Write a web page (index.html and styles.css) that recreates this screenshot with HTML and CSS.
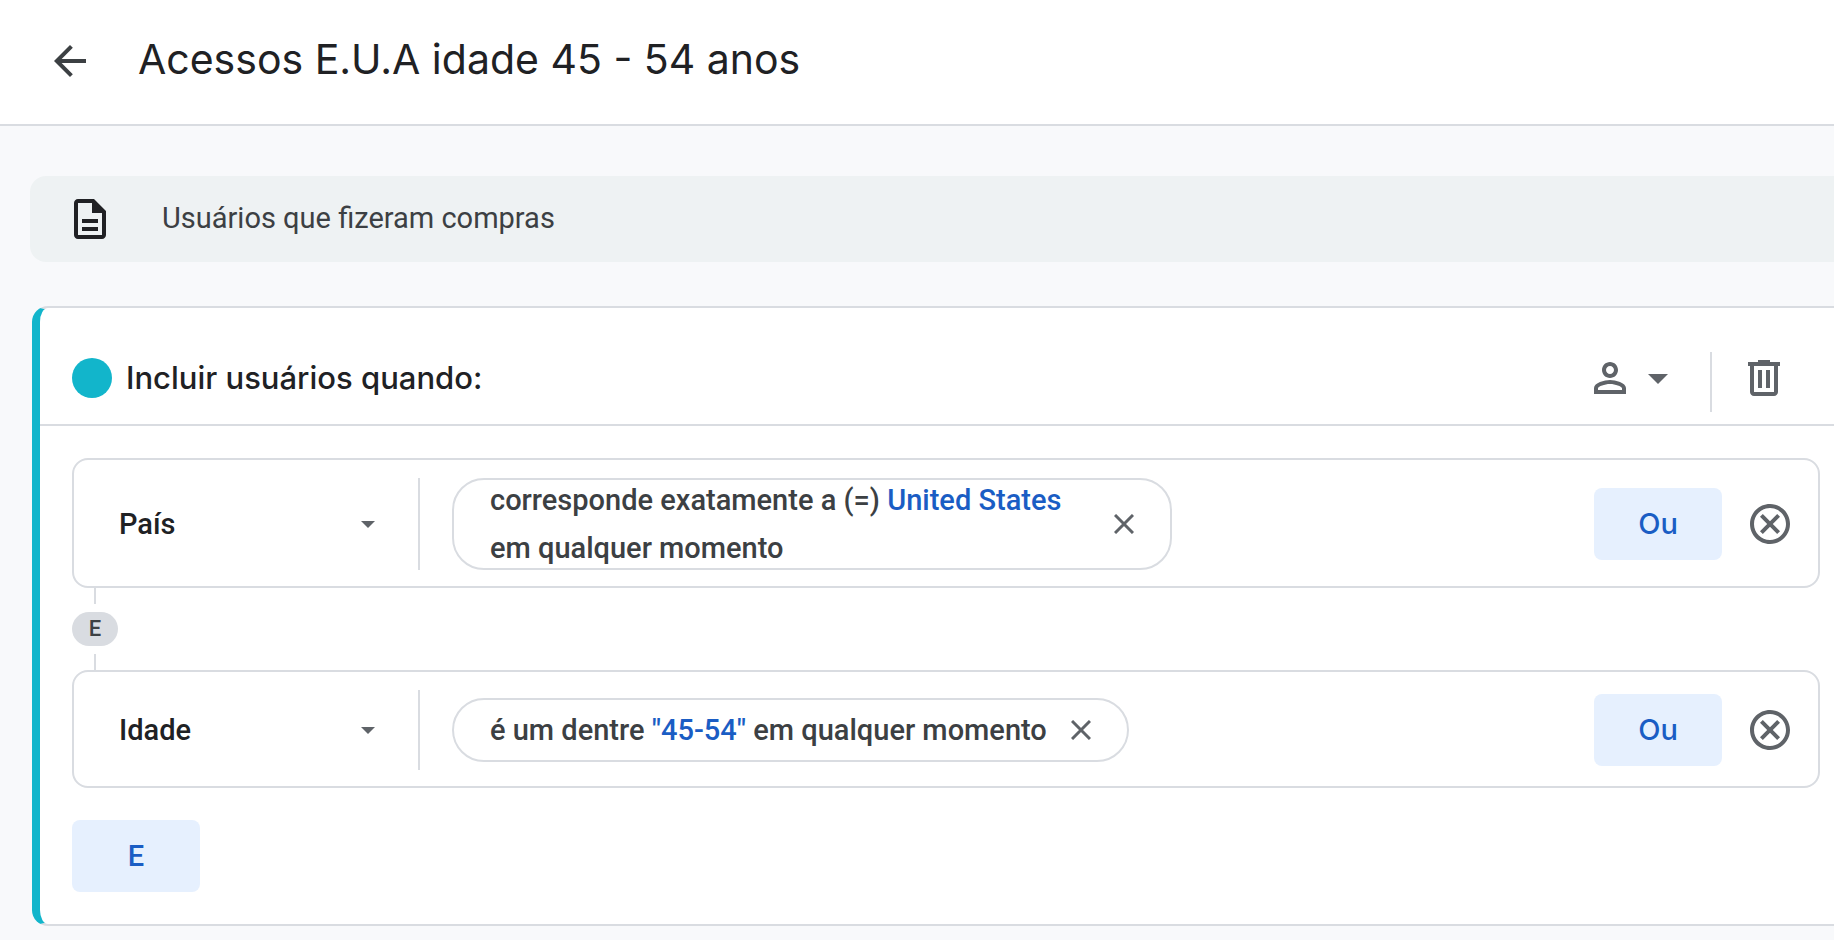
FILE: index.html
```html
<!DOCTYPE html>
<html lang="pt-BR">
<head>
    <meta charset="UTF-8">
    <meta name="viewport" content="width=device-width, initial-scale=1.0">
    <title>Acessos E.U.A idade 45 - 54 anos</title>
    <link rel="stylesheet" href="styles.css">
</head>
<body>
    <header class="page-header">
        <button type="button" class="icon-button" aria-label="Voltar">
            <svg viewBox="0 0 24 24"><path d="M20 11H7.83l5.59-5.59L12 4l-8 8 8 8 1.41-1.41L7.83 13H20v-2z"/></svg>
        </button>
        <h1 class="page-title">Acessos E.U.A idade 45 - 54 anos</h1>
    </header>

    <main>
        <div class="description">
            <svg class="icon" viewBox="0 0 24 24"><path d="M8 16h8v2H8zm0-4h8v2H8zm6-10H6c-1.1 0-2 .9-2 2v16c0 1.1.89 2 1.99 2H18c1.1 0 2-.9 2-2V8l-6-6zm4 18H6V4h7v5h5v11z"/></svg>
            <p>Usuários que fizeram compras</p>
        </div>

        <section class="card">
            <div class="card-header">
                <span class="dot"></span>
                <h2 class="card-title">Incluir usuários quando:</h2>
                <button type="button" class="scope-button" aria-label="Escopo">
                    <svg class="icon" viewBox="0 0 24 24"><path d="M12 12c2.21 0 4-1.79 4-4s-1.79-4-4-4-4 1.79-4 4 1.79 4 4 4zm0-6c1.1 0 2 .9 2 2s-.9 2-2 2-2-.9-2-2 .9-2 2-2zm0 7c-2.67 0-8 1.34-8 4v3h16v-3c0-2.66-5.33-4-8-4zm6 5H6v-.99c.2-.72 3.3-2.01 6-2.01s5.8 1.29 6 2v1z"/></svg>
                    <svg class="icon" viewBox="0 0 24 24"><path d="M7 10l5 5 5-5z"/></svg>
                </button>
                <span class="header-divider"></span>
                <button type="button" class="icon-button" aria-label="Excluir">
                    <svg viewBox="0 0 24 24"><path d="M15 4V3H9v1H4v2h1v13c0 1.1.9 2 2 2h10c1.1 0 2-.9 2-2V6h1V4h-5zm2 15H7V6h10v13zM9 8h2v9H9zm4 0h2v9h-2z"/></svg>
                </button>
            </div>

            <div class="card-body">
                <div class="condition">
                    <div class="field">
                        <select aria-label="Dimensão 1">
                            <option>País</option>
                        </select>
                    </div>
                    <div class="chip chip-wrap">
                        <p>corresponde exatamente a (=) <span class="value">United States</span><br>em qualquer momento</p>
                        <button type="button" class="chip-close" aria-label="Remover filtro">
                            <svg viewBox="0 0 20 20"><path d="M1 1l18 18M19 1L1 19"/></svg>
                        </button>
                    </div>
                    <button type="button" class="button button-or">Ou</button>
                    <button type="button" class="icon-button" aria-label="Remover condição">
                        <svg viewBox="0 0 24 24"><path d="M12 2C6.47 2 2 6.47 2 12s4.47 10 10 10 10-4.47 10-10S17.53 2 12 2zm0 18c-4.41 0-8-3.59-8-8s3.59-8 8-8 8 3.59 8 8-3.59 8-8 8zm3.59-13L12 10.59 8.41 7 7 8.41 10.59 12 7 15.59 8.41 17 12 13.41 15.59 17 17 15.59 13.41 12 17 8.41z"/></svg>
                    </button>
                </div>

                <div class="connector"><span>E</span></div>

                <div class="condition">
                    <div class="field">
                        <select aria-label="Dimensão 2">
                            <option>Idade</option>
                        </select>
                    </div>
                    <div class="chip">
                        <p>é um dentre <span class="value">"45-54"</span> em qualquer momento</p>
                        <button type="button" class="chip-close" aria-label="Remover filtro">
                            <svg viewBox="0 0 20 20"><path d="M1 1l18 18M19 1L1 19"/></svg>
                        </button>
                    </div>
                    <button type="button" class="button button-or">Ou</button>
                    <button type="button" class="icon-button" aria-label="Remover condição">
                        <svg viewBox="0 0 24 24"><path d="M12 2C6.47 2 2 6.47 2 12s4.47 10 10 10 10-4.47 10-10S17.53 2 12 2zm0 18c-4.41 0-8-3.59-8-8s3.59-8 8-8 8 3.59 8 8-3.59 8-8 8zm3.59-13L12 10.59 8.41 7 7 8.41 10.59 12 7 15.59 8.41 17 12 13.41 15.59 17 17 15.59 13.41 12 17 8.41z"/></svg>
                    </button>
                </div>

                <button type="button" class="button button-and">E</button>
            </div>
        </section>
    </main>
</body>
</html>
```
FILE: styles.css
```css
* {
    box-sizing: border-box;
}
body {
    margin: 0;
    background-color: #f8f9fb;
    color: #202124;
    font-family: Roboto, sans-serif;
    font-size: 29px;
    line-height: 48px;
}
h1, h2, p {
    margin: 0;
}
button {
    border: none;
    padding: 0;
    background: none;
    color: inherit;
    font: inherit;
    cursor: pointer;
}
svg {
    display: block;
    fill: currentColor;
}
.icon,
.icon-button,
.icon-button svg {
    width: 48px;
    height: 48px;
    flex-shrink: 0;
}
.icon-button {
    color: #5f6368;
}

/* Header */
.page-header {
    display: flex;
    align-items: center;
    gap: 44px;
    height: 126px;
    padding: 0 46px 2px;
    background-color: #fff;
    border-bottom: 2px solid #d9dce1;
}
.page-header .icon-button {
    color: #3c4043;
}
.page-title {
    padding-bottom: 4px;
    font-family: Inter, sans-serif;
    font-size: 41px;
    font-weight: 400;
}

/* Description */
.description {
    display: flex;
    align-items: center;
    gap: 48px;
    margin: 50px 0 44px 30px;
    padding: 18px 36px;
    background-color: #eef2f3;
    border-radius: 16px 0 0 16px;
}
.description p {
    padding-bottom: 2px;
    color: #3c4043;
}

/* Segment card */
.card {
    margin-left: 32px;
    background-color: #fff;
    border: 2px solid #d9dce1;
    border-left: 8px solid #12b5cb;
    border-right: none;
    border-radius: 16px 0 0 16px;
}
.card-header {
    display: flex;
    align-items: center;
    padding: 44px 46px 20px 32px;
    border-bottom: 2px solid #d9dce1;
}
.dot {
    width: 40px;
    height: 40px;
    margin-right: 14px;
    background-color: #12b5cb;
    border-radius: 50%;
}
.card-title {
    flex: 1;
    font-family: Inter, sans-serif;
    font-size: 31px;
    font-weight: 500;
    line-height: 52px;
}
.scope-button {
    display: flex;
    margin-right: 28px;
    color: #5f6368;
}
.header-divider {
    width: 2px;
    height: 60px;
    margin: 0 28px -8px 0;
    background-color: #d9dce1;
}
.card-body {
    padding: 32px 14px 32px 32px;
}

/* Condition rows */
.condition {
    display: flex;
    align-items: center;
    padding: 18px 24px 16px 0;
    border: 2px solid #d9dce1;
    border-radius: 16px;
}
.field {
    position: relative;
    align-self: stretch;
    width: 346px;
    min-height: 80px;
    margin-right: 32px;
    border-right: 2px solid #d9dce1;
}
.field select {
    appearance: none;
    width: 100%;
    height: 100%;
    padding: 0 72px 0 45px;
    border: none;
    background: none;
    color: #202124;
    font: inherit;
    font-weight: 500;
}
.field::after {
    content: "";
    position: absolute;
    top: calc(50% - 3px);
    right: 43px;
    border: 7px solid transparent;
    border-top-color: #5f6368;
    border-bottom: none;
    pointer-events: none;
}
.chip {
    display: flex;
    align-items: center;
    gap: 24px;
    height: 64px;
    margin-right: auto;
    padding: 0 36px;
    border: 2px solid #d9dce1;
    border-radius: 32px;
    color: #3c4043;
    font-weight: 500;
}
.chip-wrap {
    justify-content: space-between;
    width: 720px;
    height: 92px;
}
.value {
    color: #1a5dc4;
}
.chip-close,
.chip-close svg {
    width: 20px;
    height: 20px;
}
.chip-close svg {
    fill: none;
    stroke: #5f6368;
    stroke-width: 3;
}
.button {
    width: 128px;
    height: 72px;
    background-color: #e6f0fe;
    border-radius: 8px;
    color: #1a5dc4;
    font-weight: 500;
}
.button-or {
    margin-right: 24px;
    font-family: Inter, sans-serif;
}
.button-and {
    display: block;
    margin-top: 32px;
}

/* "E" link between two conditions */
.connector {
    display: flex;
    flex-direction: column;
    align-items: center;
    gap: 8px;
    width: 46px;
}
.connector::before,
.connector::after {
    content: "";
    width: 2px;
    height: 16px;
    background-color: #d9dce1;
}
.connector span {
    width: 46px;
    background-color: #d9dce1;
    border-radius: 17px;
    color: #3c4043;
    font-size: 22px;
    font-weight: 500;
    line-height: 34px;
    text-align: center;
}
```
